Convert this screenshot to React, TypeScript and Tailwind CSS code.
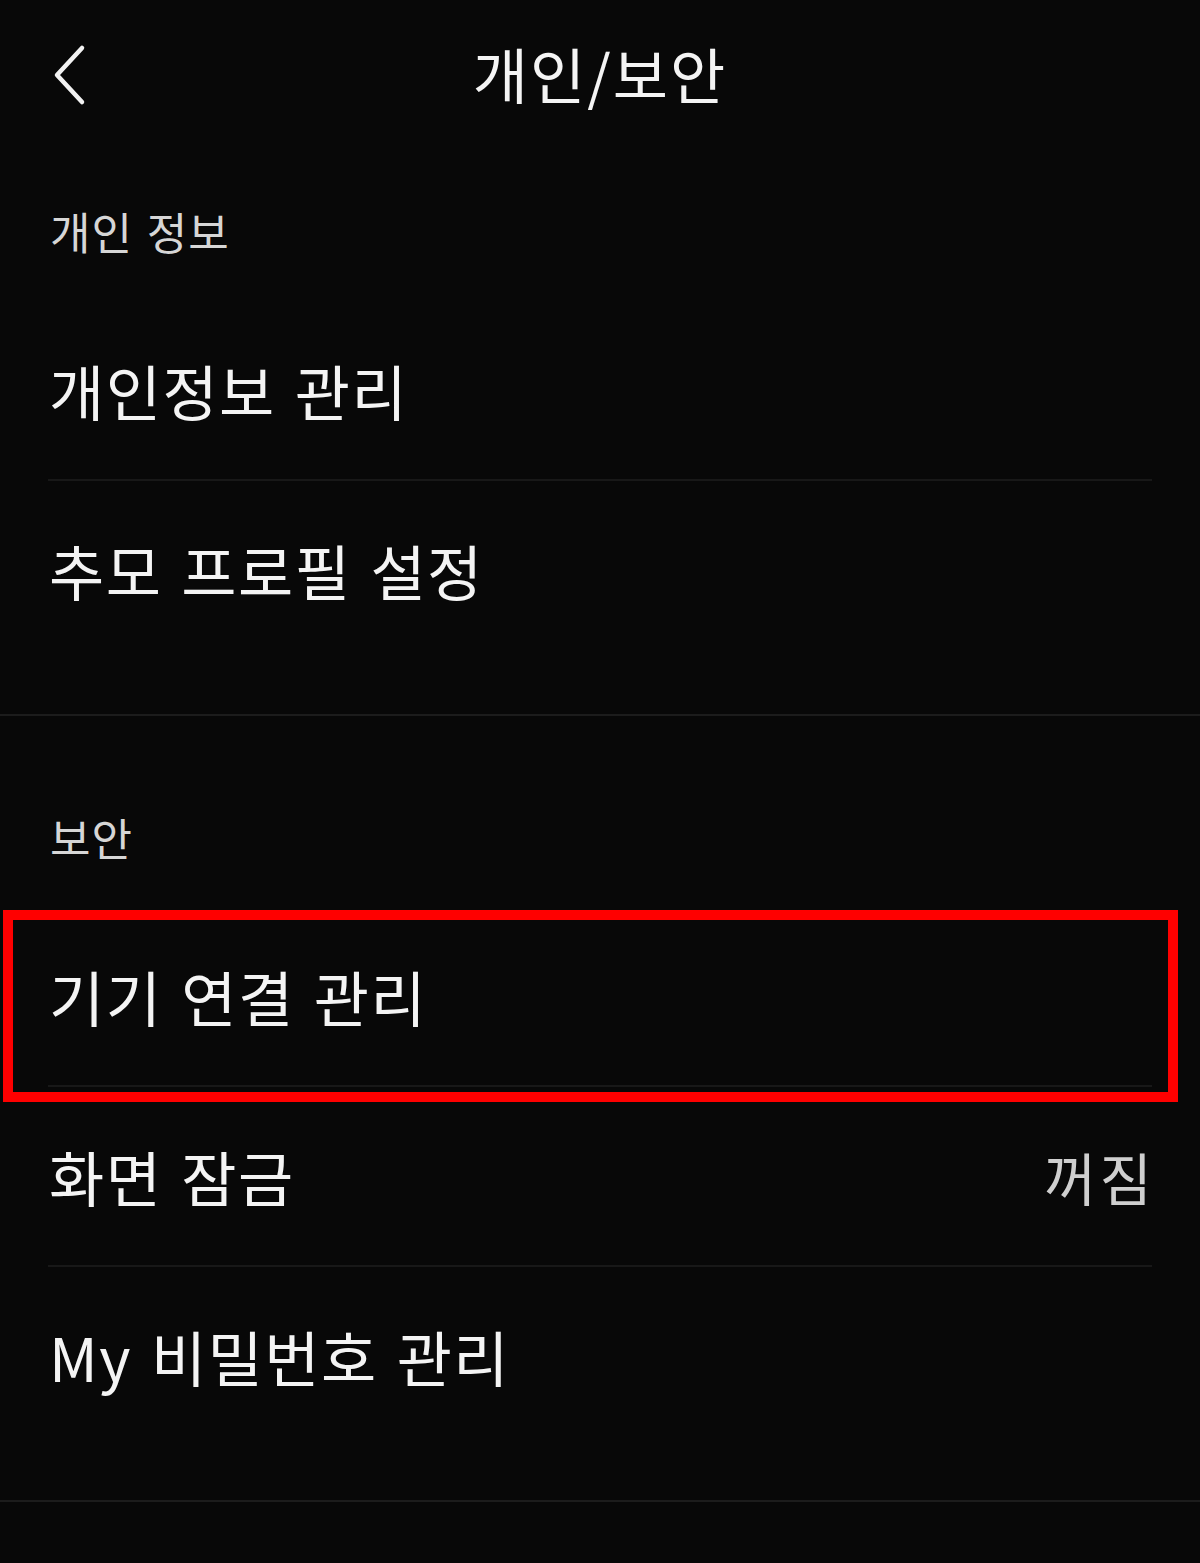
import React from 'react';

const font = { fontFamily: '"Noto Sans CJK KR", "Noto Sans", sans-serif' };

interface RowProps {
  label: string;
  value?: string;
  divider?: boolean;
  last?: boolean;
  highlight?: boolean;
}

function Row({ label, value, divider = true, last = false, highlight = false }: RowProps) {
  return (
    <div className={`relative ${last ? 'pb-[55px]' : ''}`}>
      <div className="h-[178px] px-[48px] flex items-center justify-between">
        <span className="text-[60px] leading-none tracking-[1.5px] [word-spacing:4px] text-[#f4f4f4] pl-[1px]">{label}</span>
        {value && <span className="text-[57px] leading-none tracking-[3px] text-[#cfcfcf] -mr-[3px]">{value}</span>}
      </div>
      {divider && <div className="mx-[48px] h-[2px] bg-[#181818]" />}
      {highlight && (
        <div className="absolute left-[3px] top-[3px] w-[1175px] h-[192px] border-[10px] border-[#ff0000] pointer-events-none" />
      )}
    </div>
  );
}

export default function App() {
  return (
    <div className="w-[1200px] min-h-[1563px] bg-[#080808] text-white" style={font}>
      {/* Header */}
      <div className="relative h-[145px] flex items-center justify-center">
        <button className="absolute left-[44px] top-[36px] p-[4px]">
          <svg width="44" height="70" viewBox="0 0 44 70" fill="none">
            <path d="M34 8 L9 35 L34 62" stroke="#f2f2f2" strokeWidth="4.5" strokeLinecap="round" strokeLinejoin="round" />
          </svg>
        </button>
        <h1 className="text-[60px] leading-none tracking-[2px] text-[#f4f4f4] font-normal">개인/보안</h1>
      </div>

      {/* 개인 정보 */}
      <div className="h-[156px] flex items-end px-[50px] pb-[45px]">
        <span className="text-[44px] leading-[50px] tracking-[1px] [word-spacing:3px] text-[#d6d6d6]">개인 정보</span>
      </div>
      <Row label="개인정보 관리" />
      <Row label="추모 프로필 설정" divider={false} last />
      <div className="h-[2px] bg-[#1c1c1c]" />

      {/* 보안 */}
      <div className="h-[191px] flex items-end px-[50px] pb-[45px]">
        <span className="text-[44px] leading-[50px] tracking-[1px] text-[#d6d6d6]">보안</span>
      </div>
      <Row label="기기 연결 관리" highlight />
      <Row label="화면 잠금" value="꺼짐" />
      <Row label="My 비밀번호 관리" divider={false} last />
      <div className="h-[2px] bg-[#1c1c1c]" />
    </div>
  );
}
